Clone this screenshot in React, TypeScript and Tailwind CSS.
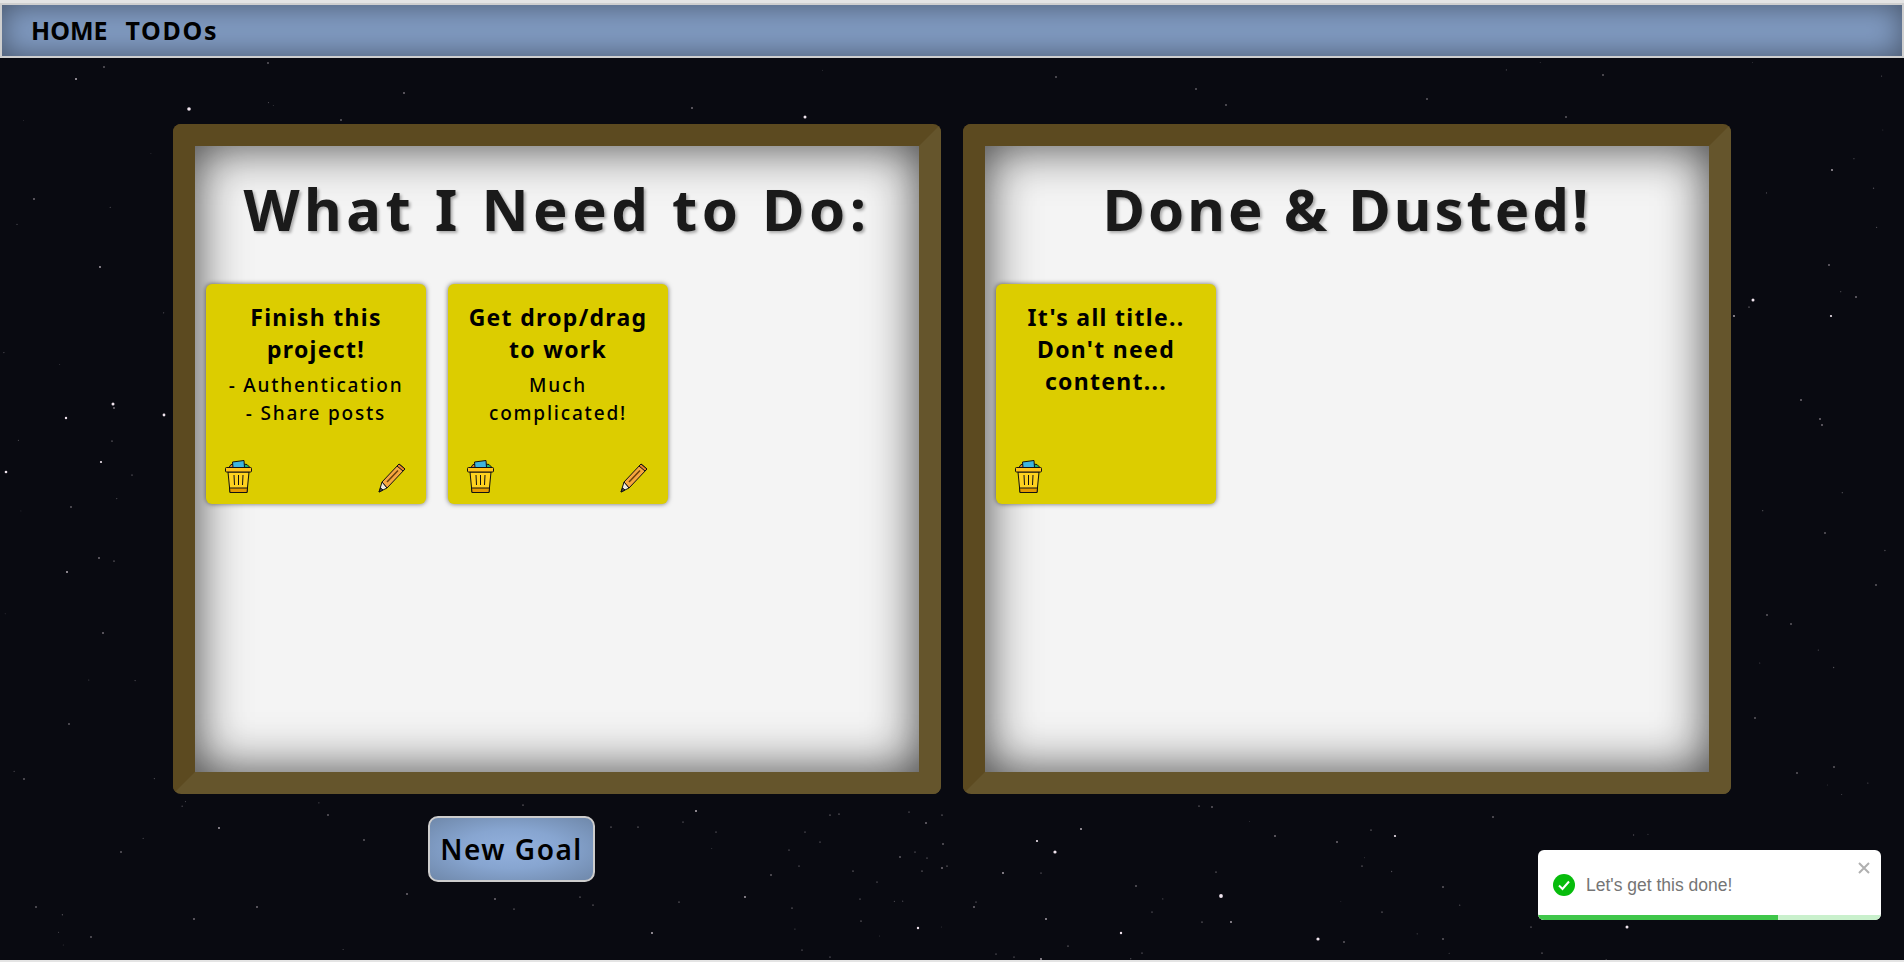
import React from 'react';

// [x, y, radius] in page pixels
const stars: number[][] = [
  [76, 77, 1], [104, 65, 0.7], [268, 61, 0.7], [189, 107, 1.8], [341, 118, 0.7], [404, 91, 0.8], [692, 106, 0.8], [805, 115, 1.5],
  [34, 197, 0.8], [100, 265, 0.9], [113, 402, 1.5], [114, 406, 0.8], [66, 416, 1.2], [164, 413, 1.4], [112, 439, 0.6], [101, 460, 1.1],
  [132, 473, 0.5], [6, 470, 1.3], [71, 505, 0.7], [99, 556, 0.8], [114, 559, 0.6], [67, 570, 1], [103, 631, 0.8], [69, 722, 0.7],
  [219, 826, 0.9], [328, 813, 0.7], [257, 905, 0.8], [194, 917, 0.8], [407, 892, 0.8], [91, 935, 0.7], [36, 905, 0.7], [24, 777, 0.7],
  [121, 850, 0.7], [364, 838, 0.7], [495, 897, 0.8], [523, 803, 0.6], [611, 825, 0.6], [638, 825, 0.6], [580, 895, 0.6], [593, 903, 0.6],
  [514, 907, 0.6], [1196, 87, 0.7], [1226, 103, 0.7], [1056, 75, 0.7], [1427, 97, 0.7], [1603, 73, 0.7], [1566, 115, 0.7],
  [1832, 168, 0.9], [1829, 263, 0.8], [1753, 298, 1.5], [1749, 305, 0.6], [1734, 314, 0.9], [1831, 314, 1.1], [1856, 295, 0.8],
  [1801, 398, 0.8], [1820, 417, 0.8], [1822, 423, 0.8], [1825, 531, 0.7], [1767, 613, 0.7], [1791, 622, 0.7], [1834, 765, 0.7],
  [1797, 771, 0.7], [1876, 583, 0.7], [1755, 716, 0.7], [1627, 925, 1.5], [1531, 925, 0.6], [1542, 951, 0.6],
  [696, 809, 1], [1037, 839, 1.1], [1055, 850, 1.6], [1081, 827, 1], [1395, 834, 1.1], [1221, 894, 1.9], [1318, 937, 1.6], [918, 926, 1.2],
  [1121, 931, 1.2], [652, 931, 1], [745, 895, 0.9], [1337, 840, 0.8], [1275, 834, 0.8], [1003, 871, 0.9], [1046, 917, 0.9], [1231, 920, 0.9],
  [1202, 920, 0.6], [1443, 885, 0.7], [1443, 937, 0.7], [1344, 940, 0.7], [1041, 957, 0.9], [942, 813, 0.6], [926, 821, 0.8], [830, 813, 0.6],
  [839, 812, 0.6], [909, 810, 0.5], [942, 866, 0.8], [947, 864, 0.6], [922, 869, 0.6], [927, 856, 0.5], [915, 850, 0.5], [900, 855, 0.7],
  [943, 842, 0.7], [853, 869, 0.6], [771, 873, 0.7], [679, 900, 0.6], [792, 906, 0.6], [861, 919, 0.6], [974, 905, 0.8], [976, 900, 0.5],
  [1136, 884, 0.7], [1152, 910, 0.5], [1382, 910, 0.6], [1362, 864, 0.6], [1216, 870, 0.6], [1371, 828, 0.6], [1199, 804, 0.6], [1212, 805, 0.7],
  [1493, 815, 0.7], [683, 820, 0.5], [716, 830, 0.5], [805, 830, 0.5], [820, 840, 0.5], [789, 848, 0.5], [799, 864, 0.5], [1068, 944, 0.6],
  [1142, 951, 0.5], [996, 952, 0.5], [1014, 955, 0.5], [802, 948, 0.5], [830, 955, 0.5], [1041, 871, 0.5], [877, 880, 0.5], [860, 897, 0.5],
];

// small faint stars behind the brighter ones
const faint: number[][] = [];
let seed = 4242;
const next = () => {
  seed = (seed * 16807) % 2147483647;
  return seed / 2147483647;
};
for (let i = 0; i < 170; i++) {
  faint.push([next() * 1904, 60 + next() * 898, 0.4 + next() * 0.3]);
}

function Starfield() {
  return (
    <svg className="absolute top-0 left-0 w-[1904px] h-[962px]" viewBox="0 0 1904 962">
      {faint.map(([x, y, r], i) => (
        <circle key={i} cx={x} cy={y} r={r} fill="#d8d0d8" opacity={0.35} />
      ))}
      {stars.map(([x, y, r], i) => (
        <circle key={i} cx={x} cy={y} r={r} fill="#f0e4ee" opacity={r > 1 ? 1 : 0.75} />
      ))}
    </svg>
  );
}

function TrashIcon() {
  return (
    <svg width="27" height="33" viewBox="0 0 27 33" stroke="#111" strokeWidth="1" strokeLinejoin="round">
      <path d="M4 7.500L6 4.500h5v3z" fill="#d9822b" />
      <path d="M18 7.500V4l4 .5 3 3z" fill="#1fb56b" />
      <path d="M8 7.500L7.500 2 19 .5l.5 7z" fill="#3db4e0" />
      <path d="M3 12l2 20.500h17l2-20.500z" fill="#ffd21f" />
      <path d="M4.500 28l.5 4.500h17l.5-4.500z" fill="#e49b00" />
      <rect x="0.500" y="7.500" width="26" height="4.500" rx="1" fill="#ffc21a" />
      <path d="M9 15l.5 10M13.500 15v10M18 15l-.5 10" fill="none" />
    </svg>
  );
}

function PencilIcon() {
  return (
    <svg width="28" height="30" viewBox="0 0 28 30" stroke="#111" strokeWidth="1" strokeLinejoin="round">
      <path d="M21 1l6 5-18 19-5-6z" fill="#f7a63f" />
      <path d="M21 1l6 5-2 2-6-5z" fill="#e8862a" />
      <path d="M9 19l11-11.500" stroke="#6b3f0a" strokeWidth="1.500" fill="none" />
      <path d="M4 19l5 6-8 4z" fill="#efe9dc" />
      <path d="M2.600 25l2.400 2-4 2z" fill="#555" />
    </svg>
  );
}

type NoteProps = {
  title: string;
  lines?: string[];
  editable?: boolean;
};

function Note({ title, lines = [], editable = true }: NoteProps) {
  return (
    <div className="relative w-[220px] h-[220px] flex flex-col items-center rounded-md bg-[#dccd00] px-[18px] pt-[17px] pb-[11px] text-center text-black shadow-[0_0_5px_rgba(0,0,0,0.55)]">
      <h3 className="w-full text-[23px] leading-[32px] font-bold tracking-[1.300px]">{title}</h3>
      <div className="w-full mt-[6px] text-[19px] leading-[28px] font-medium tracking-[1.800px]">
        {lines.map((l) => (
          <p key={l}>{l}</p>
        ))}
      </div>
      <div className="mt-auto -mx-[18px] w-[220px] flex items-end justify-between pl-[19px] pr-[20px]">
        <TrashIcon />
        {editable && <PencilIcon />}
      </div>
    </div>
  );
}

function Board({ title, wide, children }: { title: string; wide?: boolean; children: React.ReactNode }) {
  return (
    <section className="w-[768px] h-[670px] rounded-lg border-[22px] border-t-[#5c4a20] border-l-[#5c4a20] border-r-[#65552c] border-b-[#65552c]">
      <div className="h-full bg-[#f4f4f4] shadow-[inset_0_0_50px_rgba(0,0,0,0.75)] px-[11px]">
        <h2
          className={`pt-[27px] h-[138px] text-center text-[58px] leading-[72px] font-bold text-[#1a1a1a] [text-shadow:2px_2px_3px_rgba(0,0,0,0.3)] ${
            wide ? 'tracking-[4.500px]' : 'tracking-[3px]'
          }`}
        >
          {title}
        </h2>
        <div className="flex gap-[22px]">{children}</div>
      </div>
    </section>
  );
}

export default function App() {
  return (
    <div
      className="relative h-screen overflow-hidden flex flex-col bg-[#e4e4e4] pt-[3px] pb-[2px]"
      style={{ fontFamily: '"Noto Sans", "DejaVu Sans", sans-serif' }}
    >
      <div className="absolute inset-x-0 top-[58px] bottom-[2px] bg-[#090a11]" />
      <div className="absolute inset-x-0 top-[2px] h-[958px] overflow-hidden">
        <div className="-mt-[2px]">
          <Starfield />
        </div>
      </div>

      <nav className="relative h-[55px] flex items-center gap-[18px] border-2 border-[#cfcfcf] bg-[#819bc2] pl-[29px] shadow-[inset_0_0_30px_rgba(0,0,0,0.45)]">
        <a className="text-[25px] font-bold text-black">HOME</a>
        <a className="text-[25px] font-bold tracking-[1.700px] text-black">TODOs</a>
      </nav>

      <main className="relative flex-1 flex flex-col pt-[66px] px-[173px]">
        <div className="flex gap-[22px]">
          <Board title="What I Need to Do:" wide>
            <Note title="Finish this project!" lines={['- Authentication', '- Share posts']} />
            <Note title="Get drop/drag to work" lines={['Much complicated!']} />
          </Board>
          <Board title="Done & Dusted!">
            <Note title="It's all title.. Don't need content..." editable={false} />
          </Board>
        </div>
        <button className="mt-[22px] ml-[255px] w-[167px] h-[66px] rounded-[10px] border-2 border-[#cdcdcd] bg-[radial-gradient(ellipse_at_center,#93b1de_0%,#87a5d0_45%,#6f88aa_100%)] text-[28px] font-semibold tracking-[1.500px] text-black">
          New Goal
        </button>
      </main>

      <div
        className="absolute left-[1538px] top-[850px] w-[343px] h-[70px] overflow-hidden rounded-md bg-white"
        style={{ fontFamily: '"Liberation Sans", Arial, sans-serif' }}
      >
        <div className="flex items-center gap-[11px] pl-[15px] pt-[24px]">
          <svg width="22" height="22" viewBox="0 0 22 22">
            <circle cx="11" cy="11" r="11" fill="#07bc0c" />
            <path d="M6 11.500l3.500 3.500 6.500-7.500" fill="none" stroke="#fff" strokeWidth="2" />
          </svg>
          <span className="text-[17.500px] leading-[22px] text-[#757575]">Let's get this done!</span>
        </div>
        <svg className="absolute right-[11px] top-[12px]" width="12" height="12" viewBox="0 0 12 12">
          <path d="M1 1l10 10M11 1L1 11" stroke="#b0b0b0" strokeWidth="2" />
        </svg>
        <div className="absolute inset-x-0 bottom-0 h-[5px] bg-[#c9f0cc]">
          <div className="h-full w-[70%] bg-[#3fc64a]" />
        </div>
      </div>
    </div>
  );
}
